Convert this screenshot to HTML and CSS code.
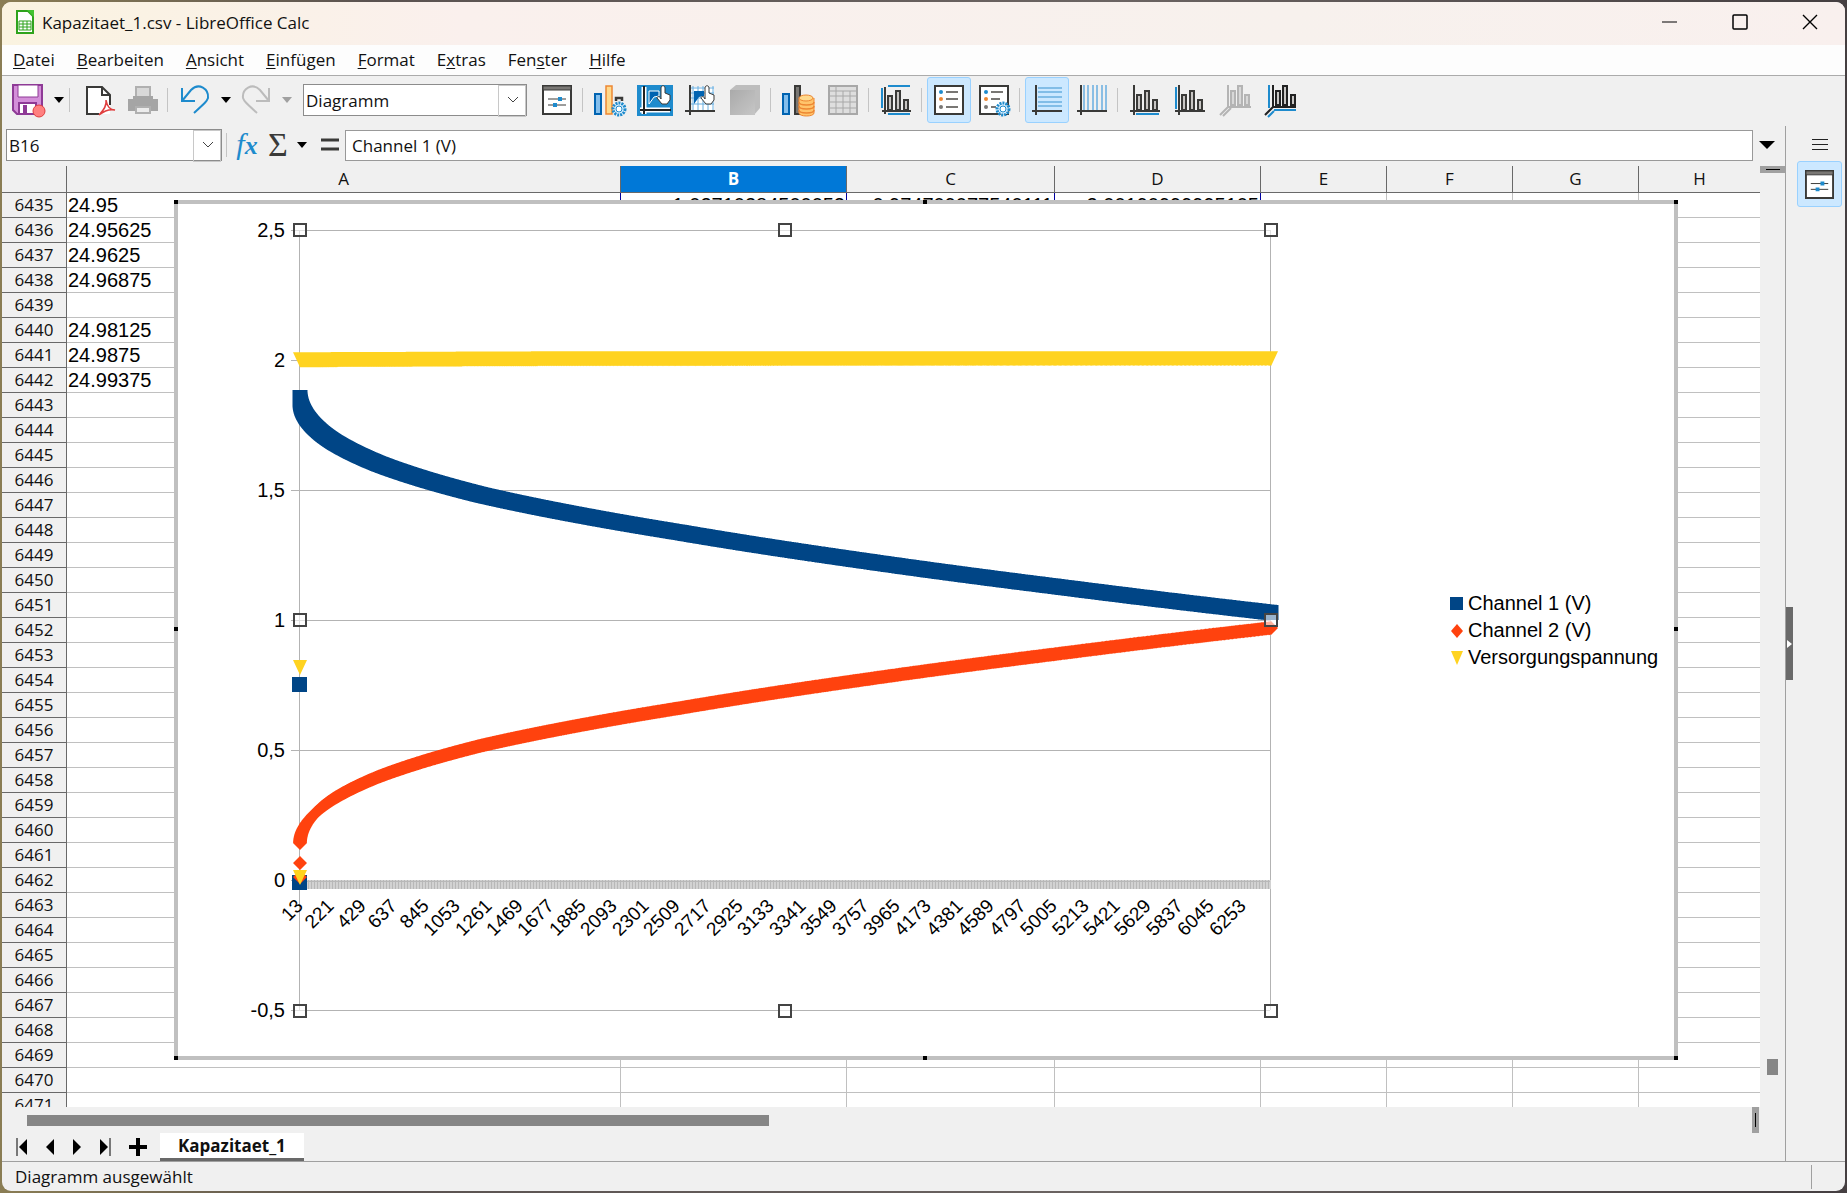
FILE: index.html
```html
<!DOCTYPE html>
<html lang="de">
<head>
    <meta charset="UTF-8">
    <meta name="viewport" content="width=device-width, initial-scale=1.0">
    <title>Kapazitaet_1.csv - LibreOffice Calc</title>
    <link rel="stylesheet" href="styles.css">
</head>
<body>
    <div class="window">
        <header class="titlebar">
            <svg class="app-icon" width="20" height="24" viewBox="0 0 20 24">
                <path d="M2 1h11l5 5v17H2z" fill="#fff" stroke="#2ea31c" stroke-width="2"/>
                <path d="M12 0h7v7z" fill="#43c330"/>
                <path d="M4 11h12v9H4zM4 14h12M4 17h12M8 11v9M12 11v9" fill="none" stroke="#2ea31c"/>
            </svg>
            <span class="title">Kapazitaet_1.csv - LibreOffice Calc</span>
            <div class="caption-buttons">
                <button aria-label="Minimieren"><svg width="16" height="16"><path d="M0 8h15" stroke="#000"/></svg></button>
                <button aria-label="Maximieren"><svg width="16" height="16"><rect x="1" y="1" width="14" height="14" rx="1" fill="none" stroke="#000" stroke-width="1.5"/></svg></button>
                <button aria-label="Schließen"><svg width="16" height="16"><path d="M1 1l14 14M15 1L1 15" stroke="#000" stroke-width="1.4"/></svg></button>
            </div>
        </header>

        <nav class="menubar">
            <button><u>D</u>atei</button>
            <button><u>B</u>earbeiten</button>
            <button><u>A</u>nsicht</button>
            <button><u>E</u>infügen</button>
            <button><u>F</u>ormat</button>
            <button>E<u>x</u>tras</button>
            <button>Fen<u>s</u>ter</button>
            <button><u>H</u>ilfe</button>
        </nav>

        <!-- Symbolleiste -->
        <div class="toolbar">
            <button class="tool" aria-label="Speichern">
                <svg viewBox="0 0 32 32">
                    <path d="M1 1h29v29H5l-4-4z" fill="#d48fd9" stroke="#8e3a96" stroke-width="2"/>
                    <path d="M6 1h20v12H6z" fill="#fff" stroke="#8e3a96"/>
                    <path d="M7 19h17v11H7z" fill="#fff" stroke="#8e3a96" stroke-width="2"/>
                    <path d="M11 21h4v9h-4z" fill="#8e3a96"/>
                    <circle cx="27" cy="27" r="6" fill="#ff8080" stroke="#e03e3e"/>
                </svg>
            </button>
            <button class="drop" aria-label="Speichern Optionen"><svg width="10" height="6"><path d="M0 0h10L5 6z"/></svg></button>
            <span class="sep"></span>
            <button class="tool" aria-label="Als PDF exportieren">
                <svg viewBox="0 0 32 32">
                    <path d="M7 3h15l7 8v19H7z" fill="#fff"/>
                    <path d="M18 30H6V3h15l8 8v10M21 3v8h8" fill="none" stroke="#3a3a38" stroke-width="2"/>
                    <path d="M18 31c4-4 8-9 7-15c1 6 4 10 9 10c-5-1-11 1-16 5z" fill="none" stroke="#e03e3e" stroke-width="1.5"/>
                </svg>
            </button>
            <button class="tool" aria-label="Drucken">
                <svg viewBox="0 0 32 32">
                    <path d="M10 3h14v10H10z" fill="#d8d8d8" stroke="#b0b0b0" stroke-width="2"/>
                    <path d="M2 15h5v-3h20v3h5v12H2z" fill="#a5a5a5"/>
                    <path d="M10 23h14v6H10z" fill="#ececec" stroke="#b0b0b0" stroke-width="2"/>
                </svg>
            </button>
            <span class="sep"></span>
            <button class="tool" aria-label="Rückgängig">
                <svg viewBox="0 0 32 32"><path d="M3 4v13h13M3 17L12 6c8-8 18-1 17 8c-1 3-2 4-14 15" fill="none" stroke="#1e8bcd" stroke-width="2"/></svg>
            </button>
            <button class="drop" aria-label="Rückgängig Liste"><svg width="10" height="6"><path d="M0 0h10L5 6z"/></svg></button>
            <button class="tool" aria-label="Wiederherstellen" disabled>
                <svg viewBox="0 0 32 32"><path d="M29 4v13H16M29 17L20 6C12-2 2 5 3 14c1 3 2 4 14 15" fill="none" stroke="#bcbcbc" stroke-width="2"/></svg>
            </button>
            <button class="drop off" aria-label="Wiederherstellen Liste" disabled><svg width="10" height="6"><path d="M0 0h10L5 6z"/></svg></button>
            <div class="combo element-combo">
                <select aria-label="Diagrammelement"><option>Diagramm</option></select>
                <svg class="chevron" width="12" height="8"><path d="M1 1l5 5l5-5" fill="none" stroke="#444"/></svg>
            </div>
            <button class="tool" aria-label="Auswahl formatieren">
                <svg viewBox="0 0 32 32">
                    <path d="M2 2h28v28H2z" fill="#fff" stroke="#3a3a38" stroke-width="2"/>
                    <path d="M2 2h28v4H2z" fill="#797774" stroke="#3a3a38"/>
                    <path d="M7 15h18M7 21h18" stroke="#3a3a38"/>
                    <path d="M17 13h4v4h-4zM12 19h4v4h-4z" fill="#1e8bcd"/>
                </svg>
            </button>
            <span class="sep"></span>
            <button class="tool" aria-label="Diagrammtyp">
                <svg viewBox="0 0 32 32">
                    <path d="M1 10h6v20H1z" fill="#83beec" stroke="#0063b1" stroke-width="2"/>
                    <path d="M12 2h6v28h-6z" fill="#ffd98b" stroke="#ed8733" stroke-width="1.5"/>
                    <path d="M22 17v-3h6v3" fill="none" stroke="#3a3a38" stroke-width="2.5"/>
                    <circle cx="25" cy="25" r="6" fill="#d9edfb" stroke="#1e8bcd" stroke-width="3" stroke-dasharray="2 1"/>
                    <circle cx="25" cy="25" r="3" fill="#fff" stroke="#1e8bcd"/>
                </svg>
            </button>
            <button class="tool" aria-label="Diagrammfläche">
                <svg class="wide" viewBox="0 0 36 32">
                    <path d="M0 1h36v31H0z" fill="#1e8bcd"/>
                    <path d="M7 3v27M3 26h30" stroke="#fff" stroke-width="5"/>
                    <path d="M7 2v28M3 26h31" stroke="#222" stroke-width="2"/>
                    <path d="M12 7h10v5l-5 1l-5 7z" fill="#0063b1" stroke="#fff"/>
                    <path d="M24 12V4c0-3 4-3 4 0v5l5 2v5l-3 4h-5l-5-6c0-2 3-2 4 1z" fill="#fff" stroke="#3a3a38"/>
                </svg>
            </button>
            <button class="tool" aria-label="Diagrammwand">
                <svg viewBox="0 0 32 32">
                    <path d="M8 3h22v23H8z" fill="#fff"/>
                    <path d="M9 2v24M14 2v24M19 2v24M24 2v24M29 2v24M6 4h24M6 9h24M6 14h24M6 20h24" stroke="#69aee0"/>
                    <path d="M6 1v30M1 27h30" stroke="#3a3a38" stroke-width="2"/>
                    <path d="M10 7h10v5l-5 1l-5 7z" fill="#0063b1"/>
                    <path d="M21 12V4c0-3 4-3 4 0v5l5 2v5l-3 4h-5l-5-6c0-2 3-2 4 1z" fill="#fff" stroke="#3a3a38"/>
                </svg>
            </button>
            <button class="tool" aria-label="3D-Ansicht" disabled>
                <svg viewBox="0 0 32 32">
                    <defs><linearGradient id="cube" x2="1" y2="1"><stop stop-color="#aaa"/><stop offset="1" stop-color="#c6c6c6"/></linearGradient></defs>
                    <path d="M1 6l6-5h24v23l-6 7H1z" fill="#bdbdbd"/>
                    <path d="M1 6h25v25H1z" fill="url(#cube)"/>
                </svg>
            </button>
            <span class="sep"></span>
            <button class="tool" aria-label="Datenbereiche">
                <svg viewBox="0 0 32 32">
                    <path d="M1 10h6v20H1z" fill="#83beec" stroke="#0063b1" stroke-width="2"/>
                    <path d="M13 2h5v28h-5z" fill="#797774" stroke="#3a3a38" stroke-width="2"/>
                    <path d="M17 14v15c0 4 15 4 15 0V14" fill="#ffc46b" stroke="#ed8733"/>
                    <ellipse cx="24" cy="14" rx="7" ry="3" fill="#ffd98b" stroke="#ed8733"/>
                    <path d="M17 18c0 4 15 4 15 0M17 22c0 4 15 4 15 0M17 26c0 4 15 4 15 0" fill="none" stroke="#ed8733" stroke-width="1.5"/>
                </svg>
            </button>
            <button class="tool" aria-label="Datentabelle" disabled>
                <svg viewBox="0 0 32 32">
                    <path d="M2 2h28v28H2z" fill="#dedede" stroke="#a8a8a8" stroke-width="2"/>
                    <path d="M2 7h28M2 12h28M2 18h28M2 24h28M9 2v28M16 7v23M23 7v23" stroke="#a8a8a8"/>
                </svg>
            </button>
            <span class="sep"></span>
            <button class="tool" aria-label="Titel">
                <svg viewBox="0 0 32 32">
                    <path d="M8 2h22M8 30h22M2 4v20" stroke="#1e8bcd" stroke-width="2"/>
                    <path d="M5 3v27M2 27h29" stroke="#3a3a38" stroke-width="2"/>
                    <path d="M8 12h4v14H8zM16 7h4v19h-4zM24 16h4v10h-4z" fill="#c8c6c4" stroke="#3a3a38" stroke-width="2"/>
                </svg>
            </button>
            <span class="sep"></span>
            <button class="tool on" aria-label="Legende ein/aus">
                <svg viewBox="0 0 32 32">
                    <path d="M2 2h28v28H2z" fill="#fff" stroke="#3a3a38" stroke-width="2"/>
                    <circle cx="8" cy="8" r="2" fill="#1e8bcd"/><circle cx="8" cy="15" r="2" fill="#ed8733"/><circle cx="8" cy="23" r="2" fill="#797774"/>
                    <path d="M13 8h12M13 15h12M13 23h12" stroke="#797774" stroke-width="2"/>
                </svg>
            </button>
            <button class="tool" aria-label="Legende">
                <svg viewBox="0 0 32 32">
                    <path d="M2 2h28v28H2z" fill="#fff" stroke="#3a3a38" stroke-width="2"/>
                    <circle cx="8" cy="8" r="2" fill="#1e8bcd"/><circle cx="8" cy="15" r="2" fill="#ed8733"/><circle cx="8" cy="23" r="2" fill="#797774"/>
                    <path d="M13 8h12M13 15h9M13 23h5" stroke="#797774" stroke-width="2"/>
                    <circle cx="25" cy="25" r="6" fill="#d9edfb" stroke="#1e8bcd" stroke-width="3" stroke-dasharray="2 1"/>
                    <circle cx="25" cy="25" r="3" fill="#fff" stroke="#1e8bcd"/>
                </svg>
            </button>
            <span class="sep"></span>
            <button class="tool on" aria-label="Horizontale Gitter">
                <svg viewBox="0 0 32 32">
                    <path d="M7 4h24M7 8h24M7 13h24M7 18h24M7 22h24" stroke="#69aee0" stroke-width="1.5"/>
                    <path d="M5 1v30M1 27h30" stroke="#3a3a38" stroke-width="2"/>
                </svg>
            </button>
            <button class="tool" aria-label="Vertikale Gitter">
                <svg viewBox="0 0 32 32">
                    <path d="M8 1v25M12 1v25M17 1v25M21 1v25M26 1v25M30 1v25" stroke="#69aee0" stroke-width="1.5"/>
                    <path d="M5 1v30M1 27h30" stroke="#3a3a38" stroke-width="2"/>
                </svg>
            </button>
            <span class="sep"></span>
            <button class="tool" aria-label="X-Achse">
                <svg viewBox="0 0 32 32">
                    <path d="M7 30h23" stroke="#1e8bcd" stroke-width="2"/>
                    <path d="M5 1v30M1 27h30" stroke="#3a3a38" stroke-width="2"/>
                    <path d="M8 11h4v15H8zM16 7h4v19h-4zM24 16h4v10h-4z" fill="#c8c6c4" stroke="#3a3a38" stroke-width="2"/>
                </svg>
            </button>
            <button class="tool" aria-label="Y-Achse">
                <svg viewBox="0 0 32 32">
                    <path d="M2 3v22" stroke="#1e8bcd" stroke-width="2"/>
                    <path d="M5 1v30M1 27h30" stroke="#3a3a38" stroke-width="2"/>
                    <path d="M8 11h4v15H8zM16 7h4v19h-4zM24 16h4v10h-4z" fill="#c8c6c4" stroke="#3a3a38" stroke-width="2"/>
                </svg>
            </button>
            <button class="tool" aria-label="Z-Achse" disabled>
                <svg viewBox="0 0 32 32">
                    <path d="M9 1v22M9 23h23M9 23l-8 8M12 24l-8 8" stroke="#b4b4b4" stroke-width="2"/>
                    <path d="M12 7h4v14h-4zM19 2h4v19h-4zM26 11h4v10h-4z" fill="#d8d8d8" stroke="#b4b4b4" stroke-width="2"/>
                </svg>
            </button>
            <button class="tool" aria-label="Alle Achsen">
                <svg viewBox="0 0 32 32">
                    <path d="M5 1v23M10 26h22M10 27l-6 6" stroke="#1e8bcd" stroke-width="2"/>
                    <path d="M9 1v22M8 23h24M9 23l-8 8" stroke="#222" stroke-width="2"/>
                    <path d="M12 7h4v14h-4zM19 2h4v19h-4zM27 11h4v10h-4z" fill="#c8c6c4" stroke="#222" stroke-width="2"/>
                </svg>
            </button>
        </div>

        <div class="workspace">
            <main class="document">
                <div class="formulabar">
                    <div class="combo name-box">
                        <input type="text" value="B16" aria-label="Namensfeld">
                        <svg class="chevron" width="12" height="8"><path d="M1 1l5 5l5-5" fill="none" stroke="#444"/></svg>
                    </div>
                    <span class="sep"></span>
                    <button class="fx" aria-label="Funktionsassistent">f<b>x</b></button>
                    <button class="sigma" aria-label="Funktion auswählen">Σ</button>
                    <button class="drop" aria-label="Funktionsliste"><svg width="10" height="6"><path d="M0 0h10L5 6z"/></svg></button>
                    <button class="equals" aria-label="Formel"><svg width="18" height="14"><path d="M0 2h18M0 11h18" stroke="#3a3a38" stroke-width="3"/></svg></button>
                    <input class="formula" type="text" value="Channel 1 (V)" aria-label="Eingabezeile">
                    <button class="expand" aria-label="Eingabezeile erweitern"><svg width="16" height="8"><path d="M0 0h16L8 8z"/></svg></button>
                </div>

                <div class="sheet-area">
                    <div class="sheet">
                        <table class="grid">
                            <colgroup>
                                <col class="c-head"><col class="c-a"><col class="c-b"><col class="c-c"><col class="c-d">
                                <col class="c-std"><col class="c-std"><col class="c-std"><col>
                            </colgroup>
                            <thead>
                                <tr><th></th><th>A</th><th class="active">B</th><th>C</th><th>D</th><th>E</th><th>F</th><th>G</th><th>H</th></tr>
                            </thead>
                            <tbody id="rows"></tbody>
                        </table>

                        <div class="chart">
                            <svg id="chart" width="1504" height="860" viewBox="174 200 1504 860" role="img" aria-label="Diagramm">
                                <rect x="176" y="202" width="1500" height="856" fill="#fff" stroke="#c0c0c0" stroke-width="4"/>
                                <g id="frameHandles"></g>
                                <g id="gridlines" stroke="#b3b3b3" shape-rendering="crispEdges"></g>
                                <g id="ticks" shape-rendering="crispEdges"></g>
                                <g id="labels" class="chart-text"></g>
                                <path id="series1" fill="#004586"/>
                                <path id="series2" fill="#ff420e"/>
                                <path id="series3" fill="#ffd320"/>
                                <g id="plotHandles" fill="#fff" fill-opacity="0.6" stroke="#444" stroke-width="2"></g>
                                <g class="chart-text">
                                    <rect x="1450" y="597" width="13" height="13" fill="#004586"/>
                                    <text x="1468" y="610">Channel 1 (V)</text>
                                    <path d="M1457 624l6 7l-6 7l-6-7z" fill="#ff420e"/>
                                    <text x="1468" y="637">Channel 2 (V)</text>
                                    <path d="M1451 651h12l-6 14z" fill="#ffd320"/>
                                    <text x="1468" y="664">Versorgungspannung</text>
                                </g>
                            </svg>
                        </div>
                    </div>
                    <div class="vscroll">
                        <div class="split-h"></div>
                        <div class="thumb"></div>
                    </div>
                </div>

                <div class="hscroll">
                    <div class="track"><div class="thumb"></div></div>
                    <div class="split-v"></div>
                </div>

                <div class="tabbar">
                    <button aria-label="Erste Tabelle"><svg width="14" height="18"><path d="M1 0v18" stroke="#000"/><path d="M11 1v16L3 9z"/></svg></button>
                    <button aria-label="Vorherige Tabelle"><svg width="14" height="18"><path d="M11 1v16L3 9z"/></svg></button>
                    <button aria-label="Nächste Tabelle"><svg width="14" height="18"><path d="M3 1v16l8-8z"/></svg></button>
                    <button aria-label="Letzte Tabelle"><svg width="14" height="18"><path d="M3 1v16l8-8z"/><path d="M13 0v18" stroke="#000"/></svg></button>
                    <button class="add" aria-label="Tabelle hinzufügen"><svg width="20" height="20"><path d="M10 1v18M1 10h18" stroke="#000" stroke-width="4"/></svg></button>
                    <button class="tab">Kapazitaet_1</button>
                </div>
            </main>

            <aside class="sidebar">
                <button class="side-menu" aria-label="Seitenleisteneinstellungen"><svg width="16" height="12" shape-rendering="crispEdges"><path d="M0 1h16M0 6h16M0 11h16" stroke="#222"/></svg></button>
                <button class="deck on" aria-label="Eigenschaften">
                    <svg viewBox="0 0 32 32">
                        <path d="M2 2h28v28H2z" fill="#fff" stroke="#3a3a38" stroke-width="2"/>
                        <path d="M2 2h28v4H2z" fill="#797774" stroke="#3a3a38"/>
                        <path d="M7 15h18M7 21h18" stroke="#3a3a38"/>
                        <path d="M17 13h4v4h-4zM12 19h4v4h-4z" fill="#1e8bcd"/>
                    </svg>
                </button>
                <button class="side-grip" aria-label="Seitenleiste ausblenden"><svg width="7" height="10"><path d="M1 1v8l5-4z" fill="#fff"/></svg></button>
            </aside>
        </div>

        <footer class="statusbar">
            <span>Diagramm ausgewählt</span>
            <span class="status-end"></span>
        </footer>
    </div>

    <script>
        // Tabellenzeilen
        const cells = {
            6435: ['24.95', '1.02710284500052', '0.974709077540111', '2.00190999995105'],
            6436: ['24.95625'],
            6437: ['24.9625'],
            6438: ['24.96875'],
            6440: ['24.98125'],
            6441: ['24.9875'],
            6442: ['24.99375']
        };
        let html = '';
        for (let r = 6435; r <= 6471; r++) {
            const v = cells[r] || [];
            html += `<tr><th>${r}</th>`;
            for (let c = 0; c < 8; c++) {
                html += `<td>${v[c] || ''}</td>`;
            }
            html += '</tr>';
        }
        document.getElementById('rows').innerHTML = html;

        // Diagrammgeometrie
        const X0 = 299, X1 = 1270, Y0 = 880, UNIT = 260;
        const py = v => Math.round(Y0 - v * UNIT);
        const set = (id, s) => document.getElementById(id).innerHTML = s;

        // Gitterlinien und Beschriftung der Y-Achse
        let lines = '', labels = '';
        for (let v = -0.5; v <= 2.5; v += 0.5) {
            lines += `<path d="M${X0 - 8} ${py(v)}H${X1}"/>`;
            labels += `<text x="285" y="${py(v) + 7}" text-anchor="end">${String(v).replace('.', ',')}</text>`;
        }
        lines += `<path d="M${X0} ${py(2.5)}V${py(-0.5)}M${X1} ${py(2.5)}V${py(-0.5)}"/>`;
        set('gridlines', lines);

        // X-Achse
        for (let i = 0; i <= 30; i++) {
            const x = Math.round(304 + i * 31.42);
            labels += `<text class="x-label" transform="translate(${x} 907) rotate(-45)" text-anchor="end">${13 + i * 208}</text>`;
        }
        set('labels', labels);

        let ticks = `<rect x="${X0}" y="880" width="${X1 - X0 + 1}" height="9" fill="#d2d2d2"/>`;
        let d = '';
        for (let x = X0 + 9; x < X1; x += 3) {
            d += `M${x} 880v9`;
        }
        ticks += `<path d="${d}M${X0} 881H${X1}" stroke="#b8b8b8"/>`;
        set('ticks', ticks);

        // Datenpunkte: Wurzel des Abstands zur Y-Achse -> Abfall in Pixel
        const curve = [[0, 0], [5.5, 42], [8.9, 66.5], [11.4, 83.5], [13.4, 97], [16.7, 117.5], [19.5, 135], [23.4, 161], [27.5, 189], [31.16, 215]];
        function drop(s) {
            let i = 1;
            while (i < curve.length - 1 && curve[i][0] < s) i++;
            const [a, b] = [curve[i - 1], curve[i]];
            return a[1] + (b[1] - a[1]) * (s - a[0]) / (b[0] - a[0]);
        }

        const square = (x, y) => `M${x - 7} ${y - 7}h15v15h-15z`;
        const diamond = (x, y) => `M${x} ${y - 7}l7 7l-7 7l-7 -7z`;
        const triangle = (x, y) => `M${x - 7} ${y - 7}h14l-7 15z`;

        let p1 = square(299, 684) + square(299, 882);
        let p2 = diamond(300, 863) + diamond(300, 877);
        let p3 = triangle(300, 667) + triangle(300, 877);
        const N = 1400;
        for (let i = 0; i <= N; i++) {
            const s = Math.sqrt(971) * i / N;
            const u = s * s;
            const y = 397 + drop(s);
            p1 += square((299.5 + u).toFixed(1), +y.toFixed(1));
            p2 += diamond(+(300 + u).toFixed(1), +(1240 - y).toFixed(1));
            p3 += triangle((300 + u).toFixed(1), +(359.3 - Math.min(1, u / 250)).toFixed(1));
        }
        document.getElementById('series1').setAttribute('d', p1);
        document.getElementById('series2').setAttribute('d', p2);
        document.getElementById('series3').setAttribute('d', p3);

        // Auswahlgriffe
        let handles = '';
        for (const [x, y] of [[300, 230], [785, 230], [1271, 230], [300, 620], [1271, 620], [300, 1011], [785, 1011], [1271, 1011]]) {
            handles += `<rect x="${x - 6}" y="${y - 6}" width="12" height="12"/>`;
        }
        set('plotHandles', handles);

        let frame = '';
        for (const x of [174, 923, 1674]) {
            for (const y of [200, 627, 1056]) {
                if (x === 923 && y === 627) continue;
                frame += `<rect x="${x}" y="${y}" width="4" height="4"/>`;
            }
        }
        set('frameHandles', frame);
    </script>
</body>
</html>
```

FILE: styles.css
```css
* {
    margin: 0;
    padding: 0;
    box-sizing: border-box;
}

body {
    height: 100vh;
    padding: 2px;
    background: linear-gradient(90deg, #8a7d54, #5a5250 20%, #6b6462 60%, #453f41);
    font-family: "Open Sans", "Noto Sans", sans-serif;
    font-size: 17px;
    color: #111;
    overflow: hidden;
}

button {
    border: none;
    background: none;
    font: inherit;
    color: inherit;
}

input,
select {
    font: inherit;
    color: inherit;
    outline: none;
}

svg {
    display: block;
}

.window {
    height: 100%;
    display: flex;
    flex-direction: column;
    background: #f0f0f0;
    border-radius: 9px;
    overflow: hidden;
}

/* Titelleiste */
.titlebar {
    display: flex;
    align-items: center;
    height: 43px;
    padding: 0 0 3px 13px;
    background: linear-gradient(90deg, #faf3e0, #faf0ed 25%, #f7f1ed 70%, #f9f0ee);
}

.title {
    margin-left: 7px;
    flex: 1;
}

.caption-buttons {
    display: flex;
}

.caption-buttons button {
    width: 70px;
    height: 40px;
    display: flex;
    align-items: center;
    justify-content: center;
}

/* Menüleiste */
.menubar {
    display: flex;
    height: 31px;
    background: #fdfdfd;
    border-bottom: 1px solid #ababab;
}

.menubar button {
    padding: 0 11px;
    line-height: 30px;
}

.menubar u {
    text-underline-offset: 2px;
}

/* Symbolleiste */
.toolbar {
    display: flex;
    align-items: center;
    height: 50px;
    padding: 0 4px 2px;
}

.tool {
    width: 44px;
    height: 46px;
    margin-right: 1px;
    display: flex;
    align-items: center;
    justify-content: center;
    border: 1px solid transparent;
    border-radius: 3px;
}

.tool svg {
    width: 32px;
    height: 32px;
    flex: none;
    overflow: visible;
}

.tool svg.wide {
    width: 36px;
}

.on {
    background: #cce8ff;
    border: 1px solid #99d1ff;
}

.drop {
    width: 15px;
    height: 46px;
    margin-right: 1px;
    display: flex;
    align-items: center;
    justify-content: center;
}

.off {
    fill: #a0a0a0;
}

.sep {
    width: 1px;
    height: 24px;
    margin: 0 5px 0 2px;
    background: #c4c4c4;
}

.combo {
    position: relative;
    height: 32px;
    background: #fff;
    border: 1px solid #8c8c8c;
}

.combo select,
.combo input {
    width: 100%;
    height: 30px;
    padding: 0 32px 0 2px;
    border: none;
    background: none;
    appearance: none;
}

.combo::after {
    content: "";
    position: absolute;
    top: 0;
    right: 0;
    width: 26px;
    height: 30px;
    border: 1px solid #c8c8c8;
    pointer-events: none;
}

.chevron {
    position: absolute;
    right: 7px;
    top: 11px;
    pointer-events: none;
}

.element-combo {
    width: 224px;
    margin: 0 8px;
}

/* Arbeitsbereich */
.workspace {
    flex: 1;
    min-height: 0;
    display: flex;
}

.document {
    flex: 1;
    min-width: 0;
    display: flex;
    flex-direction: column;
}

.formulabar {
    display: flex;
    align-items: center;
    height: 40px;
    padding: 0 10px 2px 4px;
}

.name-box {
    width: 216px;
    margin-right: 2px;
}

.fx,
.sigma {
    font-family: "Liberation Serif", serif;
    font-size: 30px;
    line-height: 34px;
}

.fx {
    width: 30px;
    font-style: italic;
    color: #1e8bcd;
}

.fx b {
    font-size: 26px;
}

.sigma {
    width: 32px;
    font-size: 34px;
    color: #3a3a38;
}

.equals {
    width: 32px;
    margin-right: 3px;
    padding-left: 11px;
}

.formula {
    flex: 1;
    min-width: 0;
    height: 31px;
    padding: 0 6px;
    border: 1px solid #999;
    background: #fff;
}

.expand {
    margin-left: 6px;
}

.sheet-area {
    flex: 1;
    min-height: 0;
    display: flex;
}

.sheet {
    position: relative;
    flex: 1;
    min-width: 0;
    overflow: hidden;
    background: #fff;
}

.grid {
    width: 100%;
    table-layout: fixed;
    border-collapse: separate;
    border-spacing: 0;
}

.c-head { width: 65px; }
.c-a { width: 554px; }
.c-b { width: 226px; }
.c-c { width: 208px; }
.c-d { width: 206px; }
.c-std { width: 126px; }

.grid th {
    background: #f0f0f0;
    font-weight: normal;
    border-right: 1px solid #696969;
    border-bottom: 1px solid #696969;
}

.grid thead th {
    height: 27px;
    line-height: 26px;
}

.grid thead th:last-child,
.grid td:last-child {
    border-right: none;
}

.grid thead th.active {
    background: #0078d7;
    color: #fff;
    font-weight: bold;
}

.grid tbody th,
.grid td {
    height: 25px;
    line-height: 24px;
}

.grid td {
    padding: 0 1px;
    border-right: 1px solid #c0c0c0;
    border-bottom: 1px solid #c0c0c0;
    font-family: "Liberation Sans", Arial, sans-serif;
    font-size: 20px;
    color: #000;
    white-space: nowrap;
}

.grid td + td {
    text-align: right;
}

/* markierter Datenbereich */
.grid tr:first-child td:nth-child(-n+5) {
    border-right-color: #0000a0;
}

.chart {
    position: absolute;
    left: 172px;
    top: 34px;
}

.chart-text {
    font-family: "Liberation Sans", Arial, sans-serif;
    font-size: 20px;
}

.chart-text .x-label {
    font-size: 19px;
}

.vscroll {
    width: 25px;
    display: flex;
    flex-direction: column;
    justify-content: space-between;
    align-items: center;
    padding-bottom: 32px;
}

.split-h {
    width: 25px;
    height: 7px;
    background: linear-gradient(#000, #000) center / 14px 1px no-repeat #a0a0a0;
}

.vscroll .thumb {
    width: 11px;
    height: 16px;
    background: #868686;
}

.hscroll {
    display: flex;
    height: 26px;
    padding-right: 26px;
}

.track {
    flex: 1;
    padding: 8px 0 0 25px;
}

.track .thumb {
    width: 43%;
    height: 11px;
    background: #868686;
}

.split-v {
    width: 7px;
    background: linear-gradient(#000, #000) center / 1px 14px no-repeat #a0a0a0;
}

.tabbar {
    display: flex;
    align-items: center;
    height: 28px;
    padding-left: 7px;
}

.tabbar button {
    width: 27px;
    display: flex;
    justify-content: center;
}

.tabbar .add {
    width: 38px;
    margin-right: 5px;
    padding-left: 4px;
}

.tabbar .tab {
    width: auto;
    height: 28px;
    padding: 0 18px;
    background: #fff;
    border-bottom: 3px solid #696969;
    font-weight: bold;
    line-height: 26px;
}

/* Seitenleiste */
.sidebar {
    position: relative;
    width: 60px;
    display: flex;
    flex-direction: column;
    align-items: center;
    padding-left: 8px;
    border-left: 1px solid #a0a0a0;
}

.side-menu {
    height: 35px;
    display: flex;
    align-items: center;
}

.deck {
    width: 45px;
    height: 46px;
    padding: 6px;
    border-radius: 3px;
}

.side-grip {
    position: absolute;
    left: 0;
    top: 481px;
    width: 7px;
    height: 73px;
    background: #696969;
}

.statusbar {
    display: flex;
    justify-content: space-between;
    align-items: center;
    height: 30px;
    padding-left: 13px;
    border-top: 1px solid #a0a0a0;
}

.status-end {
    width: 34px;
    height: 24px;
    border-left: 1px solid #a0a0a0;
}
```
